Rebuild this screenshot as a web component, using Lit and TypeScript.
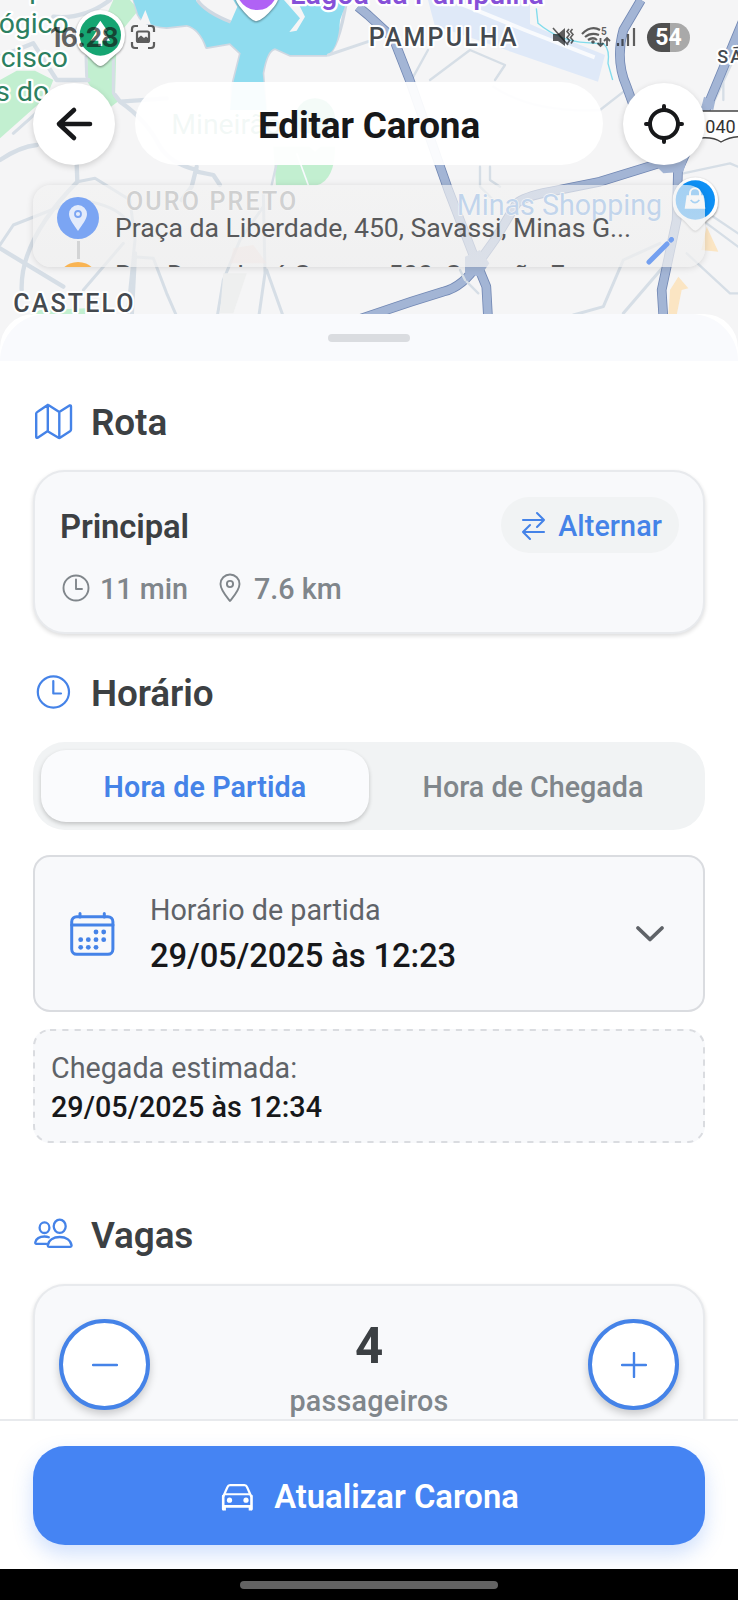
import { LitElement, html, css, svg } from "lit";
import { customElement, property, state } from "lit/decorators.js";
import { classMap } from "lit/directives/class-map.js";

@customElement("city-map")
class CityMap extends LitElement {
  static styles = css`
    :host { display: block; }
    svg { display: block; width: 738px; height: 370px; }
    .land { fill: #f5f5f6; }
    .water { fill: #8fdcef; }
    .shore { fill: none; stroke: #cfd8e2; stroke-width: 10; stroke-linejoin: round; }
    .park { fill: #c2efd0; }
    .airport { fill: #dfe9f8; }
    .runway { fill: none; stroke: #f8fafd; stroke-width: 12; }
    .trail { fill: none; stroke: #f8fafd; stroke-width: 5; }
    .street { fill: none; stroke: #d6dee6; stroke-width: 9; stroke-linejoin: round; stroke-linecap: round; }
    .wide { stroke-width: 13; }
    .thin { stroke-width: 7; }
    .casing { fill: none; stroke: #7288b4; stroke-width: 29; stroke-linejoin: round; }
    .road { fill: none; stroke: #a3b5d5; stroke-width: 24; stroke-linejoin: round; }
    .creek { fill: none; stroke: #82dcec; stroke-width: 4; }
    text { font-family: Roboto, "Noto Sans", sans-serif; paint-order: stroke; stroke: #fff; stroke-linejoin: round; }
    .green { fill: #2c8060; font-size: 85px; stroke-width: 14px; font-weight: 400; }
    .area { fill: #44494f; font-size: 75px; letter-spacing: 6.4px; font-weight: 500; stroke-width: 12px; }
    .corner { font-size: 54px; }
    .pale { fill: #8a8c8e; stroke-width: 4px; }
    .violet { fill: #8650d8; font-size: 86px; stroke-width: 14px; font-weight: 500; }
    .shop { fill: #5c98e0; font-size: 86px; stroke-width: 4px; }
    .shield { fill: #333; font-size: 54px; stroke: none; }
    .pin { fill: #fff; filter: drop-shadow(0 3px 3px rgba(0, 0, 0, 0.45)); }
  `;

  render() {
    const highways = [
      "M1074,20 L1104,45 L1180,115 L1229,240 L1345,570 L1424,775 L1459,860 L1464,950",
      "M1923,0 L1870,90 Q1845,180 1880,260 L1920,370 L2010,500",
      "M2230,60 L2130,300 L2034,510 L2030,660 L1985,870 L1990,950",
      "M2010,480 L1800,545 L1650,575 Q1570,590 1550,610 L1484,720 L1434,790 Q1390,860 1330,875 L1234,905 L1070,960",
    ];
    return html`
      <svg viewBox="0 0 2214 1110" preserveAspectRatio="none">
        <rect class="land" width="2214" height="1110" />
        <path class="park" d="M340,0 H390 L416,30 L350,110 L345,290 L360,300 L320,330 L262,245 L262,170Z" />
        <path class="park" d="M0,240 L50,212 H105 L160,240 L140,290 L0,415Z" />
        <path class="park" d="M820,440 H1005 Q1005,540 950,556 H828Z" />
        <path class="park" d="M60,960 L120,930 L260,925 L250,960Z" />
        <path class="trail" d="M890,460 L925,556" />
        <path class="airport" d="M1284,0 H1590 V72 L1630,90 L1815,165 L1794,245 L1304,76Z" />
        <path class="runway" d="M1354,0 L1574,90 L1784,172" />
        <path class="shore" d="M400,-10 L412,35 Q420,75 500,82 L560,75 Q600,85 620,142 L690,130 L722,160 L697,260 V320 H795 L788,220 Q800,150 825,145 L870,165 L980,165 Q1015,150 1040,0" />
        <path class="water" d="M400,0 L412,35 Q420,75 500,82 L560,75 Q600,85 620,142 L690,130 L722,160 L697,260 L690,330 H800 L788,220 Q800,150 825,145 L870,165 L980,165 Q1015,150 1020,60 L1042,0Z" />
        <path class="land" d="M418,72 L436,30 L452,72Z M588,0 Q610,35 692,66 L712,20 L700,0Z M852,0 L900,55 L868,96 L890,92 L915,50 L890,0Z" />
        <path class="shore" d="M592,0 Q615,35 692,66" />
        <path class="street" d="M985,165 L1104,125" />
        <path class="creek" d="M1609,25 L1614,70 Q1680,125 1760,128 L1812,132 Q1830,150 1824,190 L1838,240" />

        <path class="street wide" d="M345,285 L360,305 L500,295 M360,305 Q440,360 480,440 Q510,490 590,510 M590,500 L575,560 L545,600 M590,515 L640,525 L660,555" />
        <path class="street wide" d="M230,490 L232,545 Q60,720 65,870" />
        <path class="street wide" d="M0,480 Q60,440 110,435 M265,240 H170 L100,130 L0,170 M160,50 Q250,60 330,0" />
        <path class="street" d="M260,230 L258,170 M340,180 V280 M40,400 L130,320 M232,545 L285,535 L390,600 L405,720 L380,960" />
        <path class="street wide" d="M0,745 L190,860 M405,760 L395,950" />
        <path class="street" d="M0,735 L40,675 L230,600 Q330,610 370,650 M370,730 L250,870 M400,770 L460,775 L500,880 L535,960" />
        <path class="street" d="M650,960 L670,840 L720,720 L790,620 M790,580 L795,820 L775,960 M800,810 L850,950" />
        <path class="street thin" d="M815,555 L830,490 M1440,500 V560 L1480,600 M1470,500 V540 L1500,560" />
        <path class="street thin" d="M1284,150 L1240,230 M1290,240 L1410,150 L1515,195 L1485,240" />
        <path class="street thin" d="M1480,260 Q1600,340 1800,330 L1890,260 M2050,520 L2190,490 L2214,500" />
        <path class="street thin" d="M2200,180 L2140,310 M2170,180 V300 M2140,650 L2214,700 M2120,670 L2214,740 M2060,760 L2190,880 L2214,880" />
        <path class="street" d="M1720,945 L1810,920 L1870,780 L1980,730 M1870,940 L1990,800" />
        <path fill="#f5d4cc" opacity=".5" d="M700,745 L760,735 L800,790 H690Z" />
        <path fill="#eeefef" d="M670,820 H740 L700,940 H660Z" />
        <path fill="#fbe5c3" d="M2104,750 L2120,680 L2155,755Z M2010,870 L2035,830 L2065,865 L2045,870 L2030,945 H2005Z" />
        ${highways.map((d) => svg`<path class="casing" d=${d} />`)}
        ${highways.map((d) => svg`<path class="road" d=${d} />`)}
        <path fill="#a3b5d5" d="M1395,770 L1440,750 L1468,790 L1440,830 L1395,820Z" />
        <path class="street thin" d="M1380,810 L1395,840 M1400,845 L1435,880" />
        <path fill="#a3b5d5" d="M2112,290 L2145,305 L2140,330 L2104,322Z M1965,495 L2060,480 L2050,515 L1990,520Z" />

        <path class="pin" d="M768,64 Q750,60 718,18 Q704,0 705,-20 H837 Q838,0 822,20 Q790,60 768,64Z" />
        <path fill="#b062f5" d="M716,-4 Q735,30 772,30 Q808,30 826,-4Z" />
        <path class="pin" d="M301,198 C290,198 278,180 260,165 Q226,145 227,104 A74,74 0 0 1 375,104 Q376,145 344,165 C324,180 314,198 301,198Z" />
        <circle cx="301" cy="105" r="62" fill="#16a572" />
        <path fill="#fff" d="M301,62 L322,92 H312 L330,122 H307 V138 H295 V122 H272 L290,92 H280Z" />
        <g opacity=".8">
          <circle cx="945" cy="355" r="60" fill="#16a572" />
          <path fill="#fff" d="M885,400 L945,455 L1005,400Z" />
        </g>

        <text class="green" x="-4" y="100">ógico</text>
        <text class="green" x="2" y="202">cisco</text>
        <text class="green" x="-14" y="303">s do</text>
        <text class="green" x="88" y="-6">p</text>
        <text class="violet" x="870" y="12">Lagoa da Pampulha</text>
        <text class="area" x="1106" y="138">PAMPULHA</text>
        <text class="area corner" x="2152" y="189">SÃO</text>
        <text class="green" x="514" y="402">Mineirão</text>
        <text class="area pale" x="378" y="630">OURO PRETO</text>
        <text class="shop" x="1370" y="644">Minas Shopping</text>
        <text class="area" x="40" y="936">CASTELO</text>
        <path fill="#fff" stroke="#444" stroke-width="4" d="M2100,333 H2220 V410 Q2190,410 2163,426 Q2140,410 2100,414Z" />
        <text class="shield" x="2116" y="398">040</text>
        <path class="pin" d="M2086,692 C2074,690 2066,672 2046,656 Q2016,640 2018,600 A68,68 0 0 1 2154,600 Q2156,640 2126,656 C2106,672 2098,690 2086,692Z" />
        <circle cx="2086" cy="600" r="59" fill="#0e90f5" />
        <path fill="#fff" d="M2060,586 H2110 L2116,626 H2054Z" />
        <path fill="none" stroke="#fff" stroke-width="6" d="M2070,590 V580 A14,14 0 0 1 2100,580 V590" />
        <path fill="none" stroke="#0e90f5" stroke-width="5" d="M2072,600 Q2085,616 2098,600" />
      </svg>
    `;
  }
}

@customElement("status-bar")
class StatusBar extends LitElement {
  static styles = css`
    :host { display: flex; align-items: center; height: 74px; padding: 0 48px 0 50px; box-sizing: border-box; color: rgba(20, 20, 20, 0.68); }
    .time { font: 700 26.500px/30px Inter, Roboto, sans-serif; letter-spacing: -0.7px; width: 80px; }
    .shot { width: 26px; height: 26px; }
    .right { margin-left: auto; display: flex; align-items: center; }
    svg { display: block; fill: none; stroke: currentColor; stroke-width: 2.2; }
    .fill { fill: currentColor; stroke: none; }
    .battery { width: 43px; height: 29px; margin-left: 10px; border-radius: 15px; background: linear-gradient(90deg, #505050 54%, #a9a9a9 54%); color: #fff; font: 700 23px/29px Roboto, sans-serif; text-align: center; }
    .five { font: 700 10px Roboto, sans-serif; fill: currentColor; stroke: none; }
  `;

  render() {
    return html`
      <span class="time">16:28</span>
      <svg class="shot" viewBox="0 0 26 26">
        <path d="M2,8 V5 Q2,2 5,2 H8 M18,2 H21 Q24,2 24,5 V8 M24,18 V21 Q24,24 21,24 H18 M8,24 H5 Q2,24 2,21 V18" />
        <rect x="7" y="7.5" width="12" height="10.5" rx="1.5" />
        <path class="fill" d="M8,17 V14 L11,11.5 L14,14 L16,12.5 L18,14 V17Z" />
      </svg>
      <div class="right">
        <svg width="86" height="26" viewBox="0 0 86 26">
          <path class="fill" d="M2,10 H7 L14,4 V22 L7,17 H2Z" />
          <path stroke-width="1.6" d="M2,4 L17,21 M18,5 l-2,2.500 2.500,3 -2.500,3 2.500,3 -2,3 M21.500,5 l-2,2.500 2.500,3 -2.500,3 2.500,3 -2,3" />
          <path d="M31,10 Q40,1 49,6 M34,13 Q40,8 48,11 M37,16 Q42,12.500 46,16" />
          <circle class="fill" cx="42" cy="18" r="1.8" />
          <text class="five" x="50" y="10.500">5</text>
          <path stroke-width="1.8" d="M49.500,14 V22 M46.500,19 L49.500,22 L52.500,19 M56,22 V14 M53,17 L56,14 L59,17" />
          <path d="M67,19 V22 M71.500,15 V22 M77,10 V22 M83,4 V22" />
        </svg>
        <span class="battery">54</span>
      </div>
    `;
  }
}

const icons = {
  back: svg`<path stroke-width="4.600" d="M57,41 H26 M41,27 L26,41 L41,55" />`,
  locate: svg`<circle cx="41" cy="41" r="14" stroke-width="4" /><path stroke-width="4" d="M41,23 V27 M41,55 V59 M23,41 H27 M55,41 H59" />`,
  map: svg`<path stroke-width="2.400" d="M5,10.500 L14.300,4.200 Q15,3.800 15.700,4.200 L25.500,10.500 Q26.200,11 27,10.500 L36.500,4.500 Q38,4 38,5.500 V28.500 Q38,29.500 37,30.200 L27,36.800 Q26.200,37.300 25.500,36.800 L15,30.500 Q14.500,30 14,30.500 L4.700,36.700 Q3.200,37.300 3.200,35.700 V12.500 Q3.200,11.500 5,10.500Z M14.800,4 V30 M26.300,11 V37" />`,
  clock: svg`<circle cx="20.400" cy="20" r="15.600" stroke-width="2.200" /><path stroke-width="2.200" d="M20.300,9 V21.500 H28" />`,
  people: svg`<g stroke-width="2.300"><ellipse cx="11.500" cy="13.700" rx="4.900" ry="5.300" /><ellipse cx="26.700" cy="12.300" rx="6" ry="6.600" /><path d="M14.700,31.500 C15.500,26 20.500,23 26.700,23 S37.800,26 38.600,31.500 Q38.600,32.800 37.300,32.800 H16 Q14.700,32.800 14.700,31.500Z" /><path d="M13.500,29.800 H3.400 Q2,29.800 2.300,28.200 C3.300,24.500 7,22.500 11.500,22.500 Q14,22.500 15.800,23.300" /></g>`,
  smallClock: svg`<circle cx="15" cy="15" r="12.500" stroke-width="1.900" /><path stroke-width="1.900" d="M15,6.500 V16 H21" />`,
  smallPin: svg`<path stroke-width="1.900" d="M15,28 C11,23 5.500,17 5.500,11 A9.500,9.500 0 0 1 24.500,11 C24.500,17 19,23 15,28Z" /><circle cx="15" cy="11" r="3.100" stroke-width="1.900" />`,
  swap: svg`<path stroke-width="2.100" d="M2,9 H23 M16,2 L23,9 L16,16 M23,21 H2 M9,14 L2,21 L9,28" />`,
  calendar: svg`<rect x="5.700" y="8.700" width="41.200" height="37.600" rx="5" stroke-width="3" /><path stroke-width="3" d="M5.700,17 H47 M14,5.500 V9 M38.300,5.500 V9" /><g class="solid">${[[30, 24], [37.7, 24], [14.7, 31.7], [22.3, 31.7], [30, 31.7], [37.7, 31.7], [14.7, 39.3], [22.3, 39.3], [30, 39.3]].map(([x, y]) => svg`<circle cx=${x} cy=${y} r="2.400" />`)}</g>`,
  chevron: svg`<path stroke-width="3.800" d="M3,3 L15,14.500 L27,3" />`,
  minus: svg`<path stroke-width="2.400" d="M1,13 H25" />`,
  plus: svg`<path stroke-width="2.400" d="M1,13 H25 M13,1 V25" />`,
  car: svg`<path stroke-width="2.200" d="M2.500,13 L6.500,4 Q7.200,2.200 9,2.200 H23.500 Q25.300,2.200 26,4 L30,13" /><path stroke-width="2.600" d="M2.200,26 V13 M30.500,26 V13 M2.200,23.400 H30.500" /><path stroke-width="2" d="M4,11.300 H28.500" /><path stroke-width="3.400" stroke-linecap="butt" d="M3.200,23 V27.500 M29.400,23 V27.500" /><g class="solid"><circle cx="8.500" cy="17.200" r="2.600" /><circle cx="25" cy="17.200" r="2.600" /></g>`,
  pencil: svg`<path stroke-width="5" d="M3,25 L21,7 M25,3 L25.500,2.500" />`,
  marker: svg`<path class="solid" d="M21,34 C17,28 12,22 12,17 A9,9 0 0 1 30,17 C30,22 25,28 21,34Z" /><circle cx="21" cy="17" r="3" stroke="#7ba5f3" stroke-width="1.800" />`,
};

@customElement("ui-icon")
class UiIcon extends LitElement {
  @property() name: keyof typeof icons = "map";
  @property({ type: Number }) w = 40;
  @property({ type: Number }) h = 40;
  static styles = css`
    :host { display: block; flex: none; }
    svg { display: block; fill: none; stroke: currentColor; stroke-linecap: round; stroke-linejoin: round; }
    .solid { fill: currentColor; stroke: none; }
  `;
  render() {
    return html`<svg width=${this.w} height=${this.h} viewBox="0 0 ${this.w} ${this.h}">${icons[this.name]}</svg>`;
  }
}

@customElement("app-root")
class AppRoot extends LitElement {
  @state() private seats = 4;
  @state() private mode: "partida" | "chegada" = "partida";

  static styles = css`
    :host { display: block; font-family: Roboto, "Noto Sans", sans-serif; }
    * { box-sizing: border-box; }
    button { font: inherit; border: 0; padding: 0; margin: 0; background: none; color: inherit; }
    .screen { position: relative; display: flex; flex-direction: column; width: 738px; height: 1600px; overflow: hidden; background: #fff; }
    .map { position: absolute; inset: 0 0 auto 0; }
    .hero { position: relative; height: 314px; flex: none; }
    .topbar { display: flex; gap: 20px; padding: 8px 33px 0; height: 92px; }
    .round { display: grid; place-items: center; width: 82px; height: 82px; margin-top: 1px; border-radius: 50%; background: #fff; color: #17181a; box-shadow: 0 2px 6px rgba(0, 0, 0, 0.16); flex: none; }
    .title { flex: 1; margin: 0; height: 83px; border-radius: 42px; background: rgba(255, 255, 255, 0.94); color: #17181a; font-size: 36.9px; font-weight: 700; line-height: 88px; text-align: center; letter-spacing: -0.15px; }
    .trip { display: flex; margin: 19px 33px 0; height: 82px; padding: 12px 24px 0; border-radius: 18px; background: linear-gradient(rgba(242, 242, 242, 0.66), rgba(239, 239, 239, 0.74)); box-shadow: 0 1px 7px rgba(0, 0, 0, 0.13); overflow: hidden; }
    .stops { width: 42px; flex: none; }
    .dot { width: 42px; height: 42px; border-radius: 50%; background: #7ba5f3; color: #e3ebfb; }
    .dot.end { background: #f9b453; }
    .link { width: 3px; height: 18px; margin: 2px auto 3px; background: #d3d4d5; }
    .addresses { flex: 1; padding: 14px 0 0 16px; font-size: 26.65px; line-height: 34px; letter-spacing: -0.06px; color: #58595b; white-space: nowrap; }
    .addresses p { margin: 0 0 13px; }
    .edit { color: #74a0f0; margin: 40px 7px 0 -14px; }
    .sheet { position: relative; flex: 1; min-height: 0; overflow: hidden; background: #fff; border-radius: 34px 34px 0 0; }
    .grab { display: grid; place-items: center; height: 47px; padding-top: 1px; border-radius: 48px 48px 0 0; background: #f9fafd; }
    .grab i { width: 82px; height: 8.500px; border-radius: 4px; background: #dadce0; }
    .body { padding: 0 33px; }
    .heading { display: flex; align-items: center; gap: 18px; height: 44px; margin: 0; color: #3c4043; font-size: 36.9px; font-weight: 600; line-height: 50px; letter-spacing: -0.1px; }
    .heading ui-icon { margin-top: -4px; }
    .heading.first { margin-top: 40px; }
    .heading.second { margin-top: 38px; }
    .heading.third { margin-top: 71px; }
    .heading ui-icon, .blue { color: #4583e8; }
    .card { border: 2px solid #e8eaed; border-radius: 32px; background: #f8f9fb; box-shadow: 0 2px 4px rgba(0, 0, 0, 0.14); }
    .route { display: grid; grid-template-columns: 1fr auto; grid-template-rows: 58px 36px; height: 164px; margin-top: 25px; padding: 25px 24px 0 25px; }
    .name { font-size: 32.8px; line-height: 60px; font-weight: 600; color: #3c4043; letter-spacing: -0.1px; }
    .swap { display: flex; align-items: center; gap: 12px; height: 56px; padding: 2px 17px 0 20px; border-radius: 28px; background: #f1f3f4; color: #4583e8; font-size: 28.700px; font-weight: 500; letter-spacing: 0.1px; }
    .facts { display: flex; align-items: center; height: 36px; margin-top: 16px; color: #80868b; font-size: 28.700px; font-weight: 500; line-height: 40px; }
    .facts ui-icon { margin: -3px 9px 0 1px; }
    .facts span { margin-right: 26px; white-space: nowrap; }
    .tabs { display: grid; grid-template-columns: 1fr 1fr; height: 88px; margin-top: 26px; padding: 8px; border-radius: 32px; background: #f1f3f4; }
    .tab { display: grid; place-items: center; padding-top: 2px; border-radius: 25px; color: #80868b; font-size: 28.700px; font-weight: 500; white-space: nowrap; }
    .tab.active { color: #4583e8; font-weight: 600; letter-spacing: 0.12px; background: #fafbfd; box-shadow: 0 2px 4px rgba(0, 0, 0, 0.2); }
    .picker { display: flex; align-items: center; height: 157px; margin-top: 25px; padding: 0 38px 0 31px; border: 2px solid #dadce0; border-radius: 17px; background: #f8f9fb; }
    .when { flex: 1; padding: 5px 0 0 32px; }
    .label { font-size: 28.700px; line-height: 40px; color: #5f6368; }
    .value { font-size: 32.800px; line-height: 52px; color: #17181a; font-weight: 500; letter-spacing: -0.15px; white-space: nowrap; }
    .gray { color: #5f6368; }
    .eta { position: relative; height: 114px; margin-top: 17px; padding: 19px 18px 0; border-radius: 17px; background: #f8f9fb; }
    .dashes { position: absolute; inset: 0; width: 672px; height: 114px; fill: none; stroke: #dadce0; stroke-width: 2; stroke-dasharray: 6.150 6.150; }
    .eta .value { font-size: 28.700px; line-height: 39px; letter-spacing: 0.05px; }
    .seats { display: flex; justify-content: space-between; height: 190px; margin-top: 26px; padding: 33px 24px; }
    .step { display: grid; place-items: center; width: 91px; height: 91px; border: 4px solid #4583e8; border-radius: 50%; background: #fff; color: #4583e8; box-shadow: 0 4px 8px rgba(0, 0, 0, 0.2); }
    .count { text-align: center; color: #3c4043; font-size: 49.200px; font-weight: 700; line-height: 54px; }
    .count small { display: block; font-size: 28.700px; line-height: 40px; font-weight: 500; color: #80868b; margin-top: 8px; letter-spacing: 0.25px; }
    .footer { flex: none; height: 150px; padding: 25px 33px 0; border-top: 2px solid #e8eaed; background: #fff; overflow: hidden; }
    .submit { display: flex; align-items: center; justify-content: center; gap: 20px; width: 100%; height: 99px; padding: 2px 0 0 2px; border-radius: 32px; background: #4584f3; color: #fff; font-size: 32.800px; font-weight: 600; box-shadow: 0 9px 20px rgba(69, 132, 243, 0.25); }
    .nav { flex: none; height: 31px; display: grid; place-items: center; background: #000; }
    .nav i { width: 258px; height: 8px; border-radius: 4px; background: #636363; }
  `;

  private tab(mode: "partida" | "chegada", label: string) {
    return html`<button class=${classMap({ tab: true, active: this.mode === mode })} @click=${() => (this.mode = mode)}>${label}</button>`;
  }

  render() {
    return html`
      <div class="screen">
        <city-map class="map"></city-map>
        <header class="hero">
          <status-bar></status-bar>
          <div class="topbar">
            <button class="round"><ui-icon name="back" w="82" h="82"></ui-icon></button>
            <h1 class="title">Editar Carona</h1>
            <button class="round"><ui-icon name="locate" w="82" h="82"></ui-icon></button>
          </div>
          <div class="trip">
            <div class="stops">
              <div class="dot"><ui-icon name="marker" w="42" h="42"></ui-icon></div>
              <div class="link"></div>
              <div class="dot end"></div>
            </div>
            <div class="addresses">
              <p>Praça da Liberdade, 450, Savassi, Minas G...</p>
              <p>Rua Dom José Gaspar, 500, Coração Eu...</p>
            </div>
            <ui-icon class="edit" name="pencil" w="28" h="28"></ui-icon>
          </div>
        </header>
        <main class="sheet">
          <div class="grab"><i></i></div>
          <div class="body">
            <h2 class="heading first"><ui-icon name="map"></ui-icon>Rota</h2>
            <section class="card route">
              <div class="name">Principal</div>
              <button class="swap"><ui-icon name="swap" w="25" h="30"></ui-icon>Alternar</button>
              <div class="facts">
                <ui-icon name="smallClock" w="30" h="30"></ui-icon><span>11 min</span>
                <ui-icon name="smallPin" w="30" h="30"></ui-icon><span>7.6 km</span>
              </div>
            </section>
            <h2 class="heading second"><ui-icon name="clock"></ui-icon>Horário</h2>
            <div class="tabs">${this.tab("partida", "Hora de Partida")}${this.tab("chegada", "Hora de Chegada")}</div>
            <div class="picker">
              <ui-icon class="blue" name="calendar" w="52" h="52"></ui-icon>
              <div class="when">
                <div class="label">Horário de partida</div>
                <div class="value">29/05/2025 às 12:23</div>
              </div>
              <ui-icon class="gray" name="chevron" w="30" h="18"></ui-icon>
            </div>
            <div class="eta">
              <svg class="dashes"><rect x="1" y="1" width="670" height="112" rx="16" /></svg>
              <div class="label">Chegada estimada:</div>
              <div class="value">29/05/2025 às 12:34</div>
            </div>
            <h2 class="heading third"><ui-icon name="people"></ui-icon>Vagas</h2>
            <section class="card seats">
              <button class="step" @click=${() => this.seats--}><ui-icon name="minus" w="26" h="26"></ui-icon></button>
              <div class="count">${this.seats}<small>passageiros</small></div>
              <button class="step" @click=${() => this.seats++}><ui-icon name="plus" w="26" h="26"></ui-icon></button>
            </section>
          </div>
        </main>
        <footer class="footer">
          <button class="submit"><ui-icon name="car" w="33" h="28"></ui-icon>Atualizar Carona</button>
        </footer>
        <div class="nav"><i></i></div>
      </div>
    `;
  }
}
